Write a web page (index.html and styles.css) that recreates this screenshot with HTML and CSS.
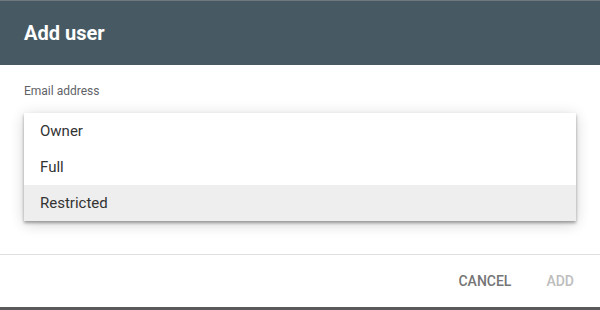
FILE: index.html
```html
<!DOCTYPE html>
<html>
<head>
<meta charset="utf-8">
<link rel="stylesheet" href="styles.css">
</head>
<body>
<div class="dialog">
  <div class="header"><h1 class="title">Add user</h1></div>
  <div class="content">
    <div class="label">Email address</div>
    <ul class="menu">
      <li class="item">Owner</li>
      <li class="item">Full</li>
      <li class="item active">Restricted</li>
    </ul>
  </div>
  <div class="footer">
    <button class="btn cancel">Cancel</button>
    <button class="btn add">Add</button>
  </div>
</div>
</body>
</html>
```
FILE: styles.css
```css
html, body {
  margin: 0;
  padding: 0;
}
body {
  width: 600px;
  height: 310px;
  background: #5a5a5a;
  font-family: Roboto, "Liberation Sans", sans-serif;
  overflow: hidden;
}
.dialog {
  border-top: 1px solid #6f787c;
  background: #fff;
  height: 306px;
  display: flex;
  flex-direction: column;
}
.header {
  height: 64px;
  background: #475a64;
  padding: 0 24px;
  display: flex;
  align-items: center;
}
.title {
  margin: 0;
  color: #fff;
  font-size: 20px;
  font-weight: 700;
}
.content {
  flex: 1;
  position: relative;
  padding: 18px 24px 0;
}
.label {
  font-size: 12px;
  line-height: 16px;
  color: #5f6368;
}
.menu {
  position: absolute;
  top: 48px;
  left: 24px;
  right: 24px;
  margin: 0;
  padding: 0;
  list-style: none;
  background: #fff;
  box-shadow: 0 2px 3px rgba(0,0,0,0.35), 0 4px 14px rgba(0,0,0,0.12), 0 0 16px rgba(0,0,0,0.06);
}
.item {
  height: 36px;
  line-height: 36px;
  padding: 0 16px;
  font-size: 15px;
  color: #333;
}
.item.active {
  background: #eeeeee;
}
.footer {
  border-top: 1px solid #e0e0e0;
  height: 52px;
  display: flex;
  justify-content: flex-end;
  align-items: center;
  padding-right: 10px;
  gap: 3px;
}
.btn {
  border: none;
  background: none;
  font-family: Roboto, "Liberation Sans", sans-serif;
  font-size: 14px;
  font-weight: 500;
  text-transform: uppercase;
  padding: 8px 16px;
}
.cancel { color: #757575; }
.add { color: #bdbdbd; }
```
